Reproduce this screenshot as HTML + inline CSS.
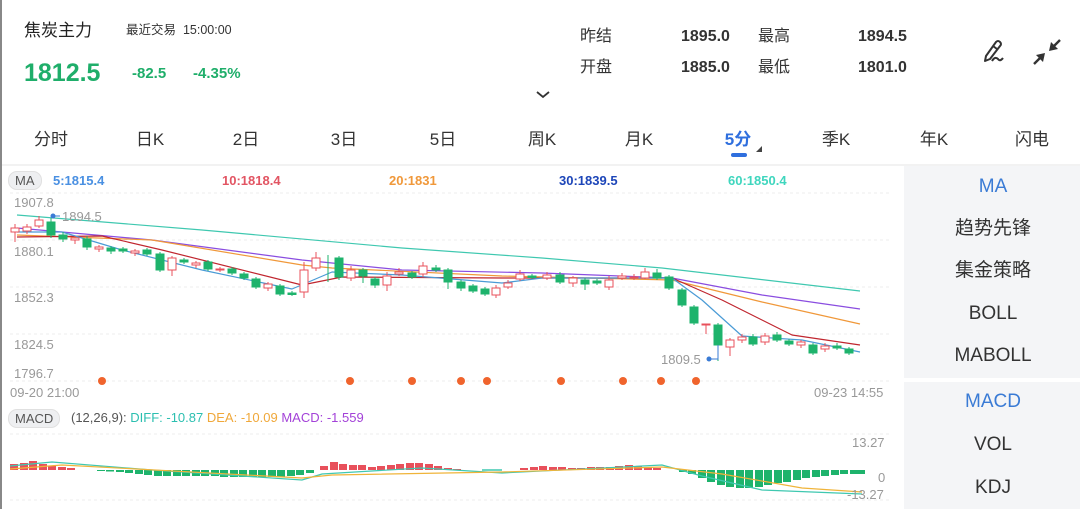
<!DOCTYPE html>
<html><head><meta charset="utf-8"><style>
*{margin:0;padding:0;box-sizing:border-box}
body{width:1080px;height:509px;overflow:hidden;background:#fff;font-family:"Liberation Sans","Noto Sans CJK SC",sans-serif;position:relative;color:#333;border-left:2px solid #888}
.a{position:absolute;white-space:nowrap}
.g{color:#1fae6a;font-weight:bold}
.st{position:absolute;font-size:16px;line-height:20px;white-space:nowrap}
.tab{position:absolute;top:125px;font-size:17px;color:#333;transform:translateX(-50%)}
.side{position:absolute;left:902px;width:178px;background:#f4f5f7}
.si{position:absolute;width:178px;text-align:center;font-size:19px;line-height:24px;color:#333;left:0}
.pill{position:absolute;background:#eeeff1;border:1px solid #e0e0e0;border-radius:9px;font-size:13px;color:#555;padding:1px 6px}
.lab{position:absolute;font-size:13px;color:#999}
</style></head><body>
<div class="a" style="left:22px;top:16px;font-size:17px;color:#222">焦炭主力</div>
<div class="a" style="left:124px;top:19px;font-size:12.5px;color:#333">最近交易&nbsp; 15:00:00</div>
<div class="a g" style="left:22px;top:59px;font-size:25px">1812.5</div>
<div class="a g" style="left:130px;top:65px;font-size:15px">-82.5</div>
<div class="a g" style="left:191px;top:65px;font-size:15px">-4.35%</div>
<div class="st" style="left:578px;top:27px">昨结</div>
<div class="st" style="left:679px;top:27px;font-weight:bold">1895.0</div>
<div class="st" style="left:756px;top:27px">最高</div>
<div class="st" style="left:856px;top:27px;font-weight:bold">1894.5</div>
<div class="st" style="left:578px;top:58px">开盘</div>
<div class="st" style="left:679px;top:58px;font-weight:bold">1885.0</div>
<div class="st" style="left:756px;top:58px">最低</div>
<div class="st" style="left:856px;top:58px;font-weight:bold">1801.0</div>
<svg class="a" style="left:532px;top:88px" width="18" height="12"><path d="M3 4 L9 9 L15 4" stroke="#333" stroke-width="1.8" fill="none"/></svg>
<svg class="a" style="left:978px;top:36px" width="32" height="32"><path d="M6 20 L16 6 Q18 4 20 6 Q22 8 20 10 L10 23 L5 25 Z M13 10 L17 13" stroke="#333" stroke-width="2" fill="none" stroke-linejoin="round"/><path d="M12 25 Q15 20 18 23 Q20 26 23 22" stroke="#333" stroke-width="2" fill="none"/></svg>
<svg class="a" style="left:1028px;top:36px" width="34" height="32"><path d="M30 4 L23 11" stroke="#333" stroke-width="2.4"/><path d="M19 15 L21 6 L28 13Z" fill="#333"/><path d="M4 28 L11 21" stroke="#333" stroke-width="2.4"/><path d="M15 17 L13 26 L6 19Z" fill="#333"/></svg>
<div class="tab" style="left:49px">分时</div><div class="tab" style="left:148px">日K</div><div class="tab" style="left:244px">2日</div><div class="tab" style="left:342px">3日</div><div class="tab" style="left:441px">5日</div><div class="tab" style="left:540px">周K</div><div class="tab" style="left:637px">月K</div>
<div class="tab" style="left:736px;color:#2f6fde;font-weight:bold">5分</div>
<div class="a" style="left:729px;top:153px;width:16px;height:4px;border-radius:2px;background:#2f6fde"></div>
<svg class="a" style="left:753px;top:145px" width="8" height="8"><path d="M7 1 L7 7 L1 7Z" fill="#444"/></svg>
<div class="tab" style="left:834px">季K</div><div class="tab" style="left:932px">年K</div><div class="tab" style="left:1030px">闪电</div>
<div class="a" style="left:0;top:164px;width:1080px;height:2px;background:#f2f2f2"></div>
<div class="pill" style="left:6px;top:171px">MA</div>
<div class="a" style="left:51px;top:173px;font-size:13px;font-weight:bold;color:#4a90e2">5:1815.4</div>
<div class="a" style="left:220px;top:173px;font-size:13px;font-weight:bold;color:#e25563">10:1818.4</div>
<div class="a" style="left:387px;top:173px;font-size:13px;font-weight:bold;color:#f0983a">20:1831</div>
<div class="a" style="left:557px;top:173px;font-size:13px;font-weight:bold;color:#1c45b8">30:1839.5</div>
<div class="a" style="left:726px;top:173px;font-size:13px;font-weight:bold;color:#3fd6be">60:1850.4</div>
<svg class="a" style="left:0;top:0" width="900" height="509">
<g stroke="#eee" stroke-dasharray="3,3"><line x1="8" y1="193" x2="888" y2="193"/><line x1="8" y1="240" x2="888" y2="240"/><line x1="8" y1="287" x2="888" y2="287"/><line x1="8" y1="334" x2="888" y2="334"/><line x1="8" y1="381" x2="888" y2="381"/><line x1="8" y1="434" x2="888" y2="434"/><line x1="8" y1="500" x2="888" y2="500"/></g>
<g fill="none" stroke-width="1.2" stroke-linejoin="round">
<polyline stroke="#3fc8b0" points="15,215 200,230 400,248 540,258 660,268 858,291"/>
<polyline stroke="#8a4de0" points="15,228 150,240 300,260 400,270 540,273 670,278 760,295 858,309"/>
<polyline stroke="#f0983a" points="15,235 150,240 300,265 330,268 500,276 670,280 760,302 858,324"/>
<polyline stroke="#c0262f" points="15,237 100,236 160,250 300,285 340,277 500,278 670,278 720,300 790,335 858,345"/>
<polyline stroke="#4a9bd6" points="15,232 60,232 120,250 200,270 290,289 330,272 400,275 500,283 540,278 670,278 700,300 740,336 800,340 858,352"/>
</g>
<g stroke="#1eb36c" fill="#1eb36c" stroke-width="1">
<path d="M49 218V238M61 232V242M85 236V250M109 246V254M121 247V253M145 248V256M158 252V272M182 258V264M206 260V271M230 267V275M242 272V280M254 277V289M278 284V296M290 291V296M337 256V280M326 255V282M361 268V283M373 277V288M410 271V279M434 265V272M446 268V289M459 280V291M471 284V293M483 287V296M530 274V279M558 272V284M583 278V290M595 279V285M655 269V280M667 275V290M680 288V307M692 305V325M716 323V361M751 334V346M775 332V342M787 339V346M811 343V355M835 343V350M847 347V355"/>
<rect x="45" y="222" width="8" height="13"/><rect x="57" y="235" width="8" height="4"/><rect x="81" y="239" width="8" height="8"/><rect x="105" y="248" width="8" height="3"/><rect x="117" y="249" width="8" height="2"/><rect x="141" y="250" width="8" height="4"/><rect x="154" y="254" width="8" height="16"/><rect x="178" y="260" width="8" height="2"/><rect x="202" y="262" width="8" height="7"/><rect x="226" y="269" width="8" height="4"/><rect x="238" y="274" width="8" height="4"/><rect x="250" y="279" width="8" height="8"/><rect x="274" y="286" width="8" height="8"/><rect x="286" y="293" width="8" height="1.5"/><rect x="333" y="258" width="8" height="19"/><rect x="357" y="270" width="8" height="6"/><rect x="369" y="279" width="8" height="6"/><rect x="406" y="273" width="8" height="4"/><rect x="430" y="268" width="8" height="2"/><rect x="442" y="270" width="8" height="12"/><rect x="455" y="282" width="8" height="6"/><rect x="467" y="286" width="8" height="5"/><rect x="479" y="289" width="8" height="5"/><rect x="526" y="276" width="8" height="1.5"/><rect x="554" y="275" width="8" height="7"/><rect x="579" y="280" width="8" height="4"/><rect x="591" y="281" width="8" height="2"/><rect x="651" y="273" width="8" height="5"/><rect x="663" y="277" width="8" height="11"/><rect x="676" y="290" width="8" height="15"/><rect x="688" y="307" width="8" height="16"/><rect x="712" y="325" width="8" height="20"/><rect x="747" y="337" width="8" height="7"/><rect x="771" y="335" width="8" height="5"/><rect x="783" y="341" width="8" height="3"/><rect x="807" y="345" width="8" height="8"/><rect x="831" y="346" width="8" height="2"/><rect x="843" y="349" width="8" height="4"/>
</g>
<g stroke="#e8505b" fill="#fff" stroke-width="1">
<path d="M13 224V242M25 224V234M37 216V228M73 236V244M97 245V252M133 249V256M170 256V276M194 261V268M218 267V272M266 282V291M302 262V298M314 252V271M349 266V281M385 272V291M397 268V276M421 262V277M494 285V298M506 280V289M518 270V281M545 272V280M571 276V287M607 276V290M620 273V280M632 274V280M643 268V279M704 324V334M728 338V356M740 334V343M763 333V345M799 340V348M823 343V352"/>
<rect x="9" y="228" width="8" height="4"/><rect x="21" y="227" width="8" height="4"/><rect x="33" y="220" width="8" height="6"/><rect x="69" y="238" width="8" height="2"/><rect x="93" y="247" width="8" height="2"/><rect x="129" y="251" width="8" height="2"/><rect x="166" y="258" width="8" height="12"/><rect x="190" y="263" width="8" height="2"/><rect x="214" y="269" width="8" height="1"/><rect x="262" y="284" width="8" height="4"/><rect x="298" y="270" width="8" height="22"/><rect x="310" y="258" width="8" height="10"/><rect x="345" y="270" width="8" height="8"/><rect x="381" y="276" width="8" height="9"/><rect x="393" y="272" width="8" height="2"/><rect x="417" y="266" width="8" height="8"/><rect x="490" y="288" width="8" height="7"/><rect x="502" y="283" width="8" height="4"/><rect x="514" y="274" width="8" height="5"/><rect x="541" y="275" width="8" height="3"/><rect x="567" y="278" width="8" height="5"/><rect x="603" y="280" width="8" height="7"/><rect x="616" y="276" width="8" height="2"/><rect x="628" y="277" width="8" height="1"/><rect x="639" y="272" width="8" height="6"/><rect x="700" y="324" width="8" height="1"/><rect x="724" y="340" width="8" height="7"/><rect x="736" y="337" width="8" height="3"/><rect x="759" y="336" width="8" height="6"/><rect x="795" y="342" width="8" height="3"/><rect x="819" y="346" width="8" height="3"/>
</g>
<circle cx="51" cy="216" r="2.5" fill="#3a7bd5"/><line x1="51" y1="216" x2="58" y2="216" stroke="#3a7bd5"/>
<text x="60" y="221" font-size="13" fill="#999" font-family="Liberation Sans">1894.5</text>
<path d="M716 345V359H707" stroke="#3a7bd5" fill="none"/><circle cx="707" cy="359" r="2.5" fill="#3a7bd5"/>
<text x="659" y="364" font-size="13" fill="#999" font-family="Liberation Sans">1809.5</text>
<g fill="#f0642d"><circle cx="100" cy="381" r="4"/><circle cx="348" cy="381" r="4"/><circle cx="410" cy="381" r="4"/><circle cx="459" cy="381" r="4"/><circle cx="485" cy="381" r="4"/><circle cx="559" cy="381" r="4"/><circle cx="621" cy="381" r="4"/><circle cx="659" cy="381" r="4"/><circle cx="694" cy="381" r="4"/></g>
<g fill="#e8505b">
<rect x="8" y="464" width="8" height="6"/><rect x="18" y="463" width="8" height="7"/><rect x="27" y="461" width="8" height="9"/><rect x="37" y="464" width="8" height="6"/><rect x="46" y="466" width="8" height="4"/><rect x="56" y="467" width="8" height="3"/><rect x="65" y="468" width="8" height="2"/>
<rect x="318" y="466" width="8" height="4"/><rect x="328" y="462" width="8" height="8"/><rect x="337" y="464" width="8" height="6"/><rect x="347" y="465" width="8" height="5"/><rect x="356" y="465" width="8" height="5"/><rect x="366" y="467" width="8" height="3"/><rect x="375" y="466" width="8" height="4"/><rect x="385" y="465" width="8" height="5"/><rect x="394" y="464" width="8" height="6"/><rect x="404" y="463" width="8" height="7"/><rect x="413" y="463" width="8" height="7"/><rect x="423" y="464" width="8" height="6"/><rect x="432" y="466" width="8" height="4"/><rect x="442" y="468" width="8" height="2"/><rect x="451" y="469" width="8" height="1"/>
<rect x="518" y="468" width="8" height="2"/><rect x="528" y="467" width="8" height="3"/><rect x="537" y="466" width="8" height="4"/><rect x="547" y="467" width="8" height="3"/><rect x="556" y="467" width="8" height="3"/><rect x="566" y="468" width="8" height="2"/><rect x="575" y="468" width="8" height="2"/><rect x="585" y="467" width="8" height="3"/><rect x="594" y="467" width="8" height="3"/><rect x="604" y="467" width="8" height="3"/><rect x="613" y="466" width="8" height="4"/><rect x="623" y="465" width="8" height="5"/><rect x="632" y="466" width="8" height="4"/><rect x="642" y="467" width="8" height="3"/><rect x="651" y="468" width="8" height="2"/>
</g>
<g fill="#1eb36c">
<rect x="95" y="470" width="8" height="1"/><rect x="104" y="470" width="8" height="1.5"/><rect x="114" y="470" width="8" height="2"/><rect x="123" y="470" width="8" height="3"/><rect x="133" y="470" width="8" height="4"/><rect x="142" y="470" width="8" height="5"/><rect x="152" y="470" width="8" height="6"/><rect x="161" y="470" width="8" height="6"/><rect x="171" y="470" width="8" height="6"/><rect x="180" y="470" width="8" height="6"/><rect x="190" y="470" width="8" height="6"/><rect x="199" y="470" width="8" height="6"/><rect x="209" y="470" width="8" height="6"/><rect x="218" y="470" width="8" height="7"/><rect x="228" y="470" width="8" height="7"/><rect x="237" y="470" width="8" height="7"/><rect x="247" y="470" width="8" height="7"/><rect x="256" y="470" width="8" height="7"/><rect x="266" y="470" width="8" height="7"/><rect x="275" y="470" width="8" height="7"/><rect x="285" y="470" width="8" height="6"/><rect x="294" y="470" width="8" height="5"/><rect x="304" y="470" width="8" height="3"/>
<rect x="677" y="470" width="8" height="2"/><rect x="686" y="470" width="8" height="4"/><rect x="696" y="470" width="8" height="8"/><rect x="705" y="470" width="8" height="12"/><rect x="715" y="470" width="8" height="15"/><rect x="724" y="470" width="8" height="17"/><rect x="734" y="470" width="8" height="18"/><rect x="743" y="470" width="8" height="18"/><rect x="753" y="470" width="8" height="17"/><rect x="762" y="470" width="8" height="15"/><rect x="772" y="470" width="8" height="13"/><rect x="781" y="470" width="8" height="12"/><rect x="791" y="470" width="8" height="10"/><rect x="800" y="470" width="8" height="8"/><rect x="810" y="470" width="8" height="7"/><rect x="819" y="470" width="8" height="6"/><rect x="829" y="470" width="8" height="5"/><rect x="838" y="470" width="8" height="4"/><rect x="848" y="470" width="8" height="4"/><rect x="855" y="470" width="8" height="4"/>
</g>
<line x1="480" y1="470" x2="500" y2="470" stroke="#3fc8b0" stroke-width="1.5"/>
<polyline fill="none" stroke="#3fc8b0" stroke-width="1.2" points="8,466 50,462 150,470 300,480 320,474 420,468 500,473 660,465 700,476 760,490 860,494"/>
<polyline fill="none" stroke="#f0b43a" stroke-width="1.2" points="8,469 60,465 300,478 330,475 500,472 660,467 720,474 800,488 860,492"/>
</svg>
<div class="lab" style="left:12px;top:195px">1907.8</div>
<div class="lab" style="left:12px;top:244px">1880.1</div>
<div class="lab" style="left:12px;top:290px">1852.3</div>
<div class="lab" style="left:12px;top:337px">1824.5</div>
<div class="lab" style="left:12px;top:366px">1796.7</div>
<div class="lab" style="left:8px;top:385px">09-20 21:00</div>
<div class="lab" style="left:812px;top:385px">09-23 14:55</div>
<div class="pill" style="left:6px;top:409px">MACD</div>
<div class="a" style="left:69px;top:410px;font-size:13px;color:#555">(12,26,9): <span style="color:#2bbfb0">DIFF: -10.87</span> <span style="color:#f0a83a">DEA: -10.09</span> <span style="color:#a342d8">MACD: -1.559</span></div>
<div class="lab" style="left:850px;top:435px">13.27</div>
<div class="lab" style="left:876px;top:470px">0</div>
<div class="lab" style="left:845px;top:487px">-13.27</div>
<div class="side" style="top:166px;height:212px">
<div class="si" style="top:9px;color:#3a7bd5">MA</div>
<div class="si" style="top:51px">趋势先锋</div>
<div class="si" style="top:93px">集金策略</div>
<div class="si" style="top:136px">BOLL</div>
<div class="si" style="top:178px">MABOLL</div>
</div>
<div class="side" style="top:382px;height:127px">
<div class="si" style="top:8px;color:#3a7bd5">MACD</div>
<div class="si" style="top:51px">VOL</div>
<div class="si" style="top:94px">KDJ</div>
</div>
</body></html>
